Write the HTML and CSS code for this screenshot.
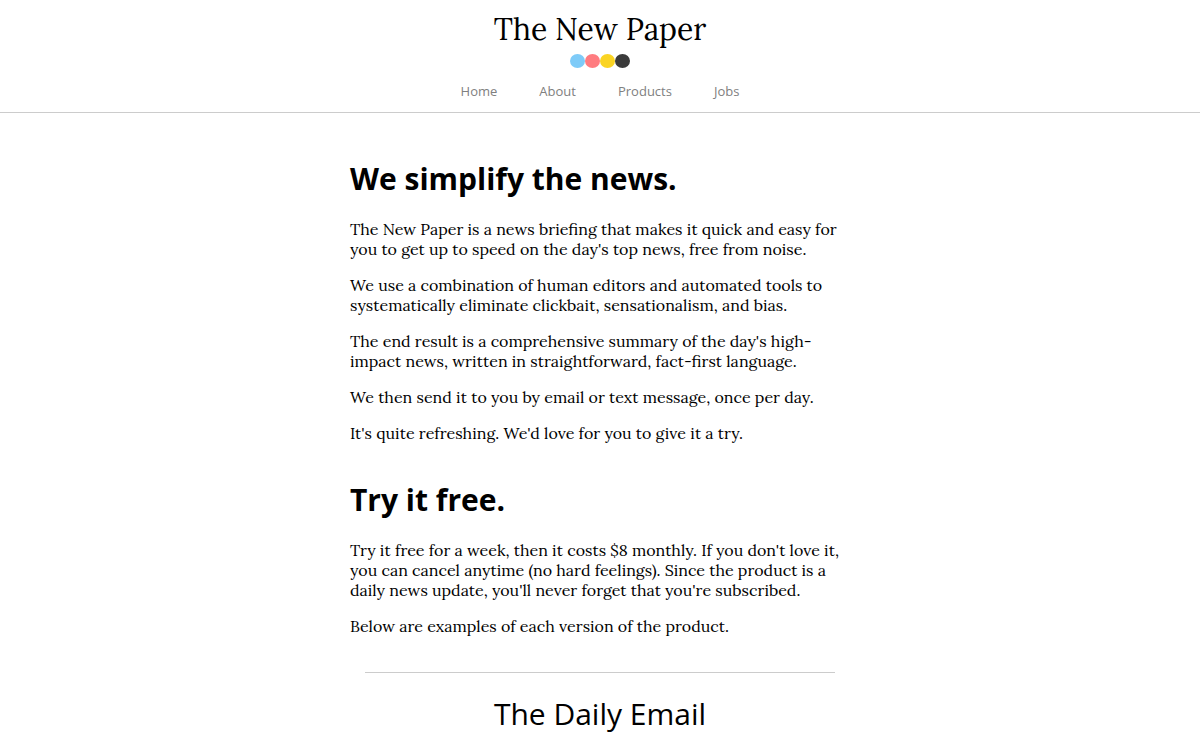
FILE: index.html
```html
<!DOCTYPE html>
<html lang="en">
<head>
    <meta charset="UTF-8">
    <meta name="viewport" content="width=device-width, initial-scale=1.0">
    <title>The New Paper</title>
    <link rel="stylesheet" href="styles.css">
</head>
<body>
    <header class="header">
        <div class="logo">The New Paper</div>
        <div class="dots">
            <span class="dot blue"></span>
            <span class="dot red"></span>
            <span class="dot yellow"></span>
            <span class="dot black"></span>
        </div>
        <nav class="nav">
            <a href="#">Home</a>
            <a href="#">About</a>
            <a href="#">Products</a>
            <a href="#">Jobs</a>
        </nav>
    </header>

    <main class="content">
        <section class="section">
            <h1>We simplify the news.</h1>
            <p>The New Paper is a news briefing that makes it quick and easy for you to get up to speed on the day's top news, free from noise.</p>
            <p>We use a combination of human editors and automated tools to systematically eliminate clickbait, sensationalism, and bias.</p>
            <p>The end result is a comprehensive summary of the day's high-impact news, written in straightforward, fact-first language.</p>
            <p>We then send it to you by email or text message, once per day.</p>
            <p>It's quite refreshing. We'd love for you to give it a try.</p>
        </section>

        <section class="section">
            <h1>Try it free.</h1>
            <p>Try it free for a week, then it costs $8 monthly. If you don't love it, you can cancel anytime (no hard feelings). Since the product is a daily news update, you'll never forget that you're subscribed.</p>
            <p>Below are examples of each version of the product.</p>
        </section>

        <section class="product">
            <h2>The Daily Email</h2>
        </section>
    </main>
</body>
</html>
```
FILE: styles.css
```css
body {
    margin: 0;
    background-color: #fff;
    color: #000;
    font-family: Lora, "Liberation Serif", serif;
    font-size: 16px;
    line-height: 20px;
}
.header {
    display: flex;
    flex-direction: column;
    align-items: center;
    padding: 10px 0 12px;
    border-bottom: 1px solid #ccc;
}
.logo {
    font-size: 30px;
    line-height: 38px;
}
.dots {
    display: flex;
    margin-top: 6px;
}
.dot {
    width: 15px;
    height: 14px;
    border-radius: 50%;
}
.blue {
    background-color: #7ecbf8;
}
.red {
    background-color: #ff7c80;
}
.yellow {
    background-color: #fad423;
}
.black {
    background-color: #3b3b3b;
}
.nav {
    display: flex;
    gap: 42px;
    margin-top: 14px;
    font-family: "Open Sans", sans-serif;
    font-size: 13px;
    line-height: 18px;
}
.nav a {
    color: #808080;
    text-decoration: none;
}
.content {
    max-width: 500px;
    margin: 0 auto;
    padding-top: 45px;
}
.section {
    margin-bottom: 36px;
}
h1 {
    margin: 0 0 19px;
    font-family: "Open Sans", sans-serif;
    font-size: 30px;
    line-height: 42px;
}
p {
    margin: 0 0 16px;
}
.product {
    margin: 0 15px;
    border-top: 1px solid #ccc;
    text-align: center;
}
.product h2 {
    margin: 20px 0 0;
    font-family: "Open Sans", sans-serif;
    font-size: 30px;
    font-weight: 400;
    line-height: 42px;
}
```
